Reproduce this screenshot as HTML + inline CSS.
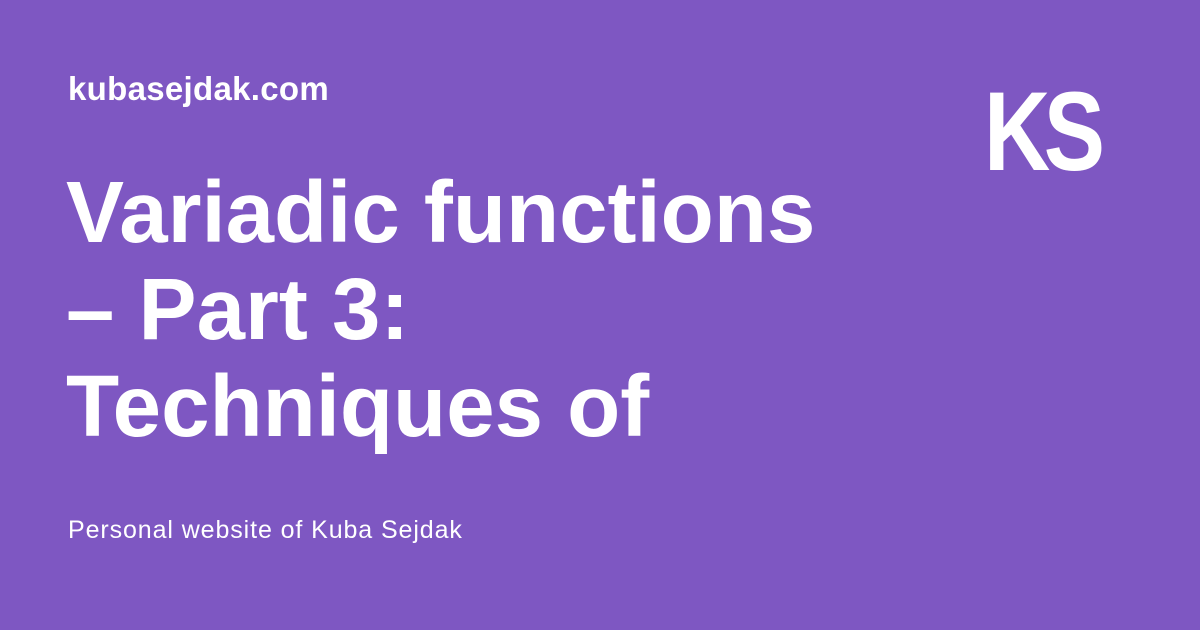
<!DOCTYPE html>
<html><head><meta charset="utf-8"><style>
html,body{margin:0;padding:0}
body{width:1200px;height:630px;background:#7e57c2;position:relative;overflow:hidden;font-family:"Liberation Sans",sans-serif;color:#fff}
.site{position:absolute;left:68px;top:69px;font-size:33px;font-weight:bold;line-height:40px;letter-spacing:0.3px}
.ks{position:absolute;left:984px;top:72px;font-size:112px;font-weight:bold;line-height:120px;transform:scaleX(0.82);transform-origin:left top;letter-spacing:-8px}
.title{position:absolute;left:66px;top:164px;font-size:87px;font-weight:bold;line-height:97px;width:900px}
.sub{position:absolute;left:68px;top:515px;font-size:25px;line-height:30px;letter-spacing:0.9px}
</style></head><body>
<div class="site">kubasejdak.com</div>
<div class="ks">KS</div>
<div class="title">Variadic functions<br>– Part 3:<br>Techniques of</div>
<div class="sub">Personal website of Kuba Sejdak</div>
</body></html>
